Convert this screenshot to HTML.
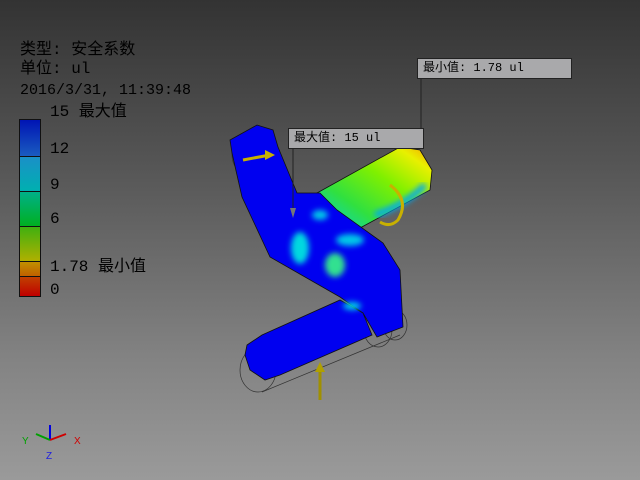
<!DOCTYPE html>
<html><head><style>
html,body{margin:0;padding:0}
body{width:640px;height:480px;overflow:hidden;background:linear-gradient(#333 0%,#565656 35%,#838383 75%,#9a9a9a 100%);position:relative;font-family:"Liberation Mono","Noto Sans CJK SC",monospace;color:#000}
.t{position:absolute;white-space:nowrap;font-size:16px;line-height:16px}
.lab{position:absolute;background:#a9a9ab;border:1px solid #222;font-size:12px;line-height:18px;padding-left:5px;box-sizing:border-box;height:21px}
</style></head><body>
<div class="t" style="left:20px;top:42px">类型: 安全系数</div>
<div class="t" style="left:20px;top:61px">单位: ul</div>
<div class="t" style="left:20px;top:83px;font-size:15px">2016/3/31, 11:39:48</div>
<div class="t" style="left:50px;top:104px">15 最大值</div>
<div class="t" style="left:50px;top:141px">12</div>
<div class="t" style="left:50px;top:177px">9</div>
<div class="t" style="left:50px;top:211px">6</div>
<div class="t" style="left:50px;top:259px">1.78 最小值</div>
<div class="t" style="left:50px;top:282px">0</div>
<div style="position:absolute;left:19px;top:119px;width:20px;height:176px;border:1px solid #111">
<div style="height:36px;background:linear-gradient(#0014b4,#1a5cc0);border-bottom:1px solid #111"></div>
<div style="height:34px;background:linear-gradient(#1a90c8,#00b0b0);border-bottom:1px solid #111"></div>
<div style="height:34px;background:linear-gradient(#00b088,#00b020);border-bottom:1px solid #111"></div>
<div style="height:34px;background:linear-gradient(#40b010,#b0b000);border-bottom:1px solid #111"></div>
<div style="height:14px;background:linear-gradient(#c09000,#c06000);border-bottom:1px solid #111"></div>
<div style="height:19px;background:linear-gradient(#c04000,#c00000)"></div>
</div>
<svg width="640" height="480" style="position:absolute;left:0;top:0">
<defs>
<linearGradient id="g" x1="0" y1="1" x2="1" y2="0">
<stop offset="0" stop-color="#00d0e0"/><stop offset="0.3" stop-color="#30e040"/><stop offset="0.6" stop-color="#80f000"/><stop offset="0.85" stop-color="#e8f000"/><stop offset="1" stop-color="#f8a000"/>
</linearGradient>
<filter id="b"><feGaussianBlur stdDeviation="3"/></filter>
</defs>
<g fill="none" stroke="#333" stroke-width="0.7">
<ellipse cx="258" cy="370" rx="18" ry="22"/>
<path d="M258 348 L390 295 M262 392 L400 335"/>
<ellipse cx="378" cy="330" rx="14" ry="17"/><ellipse cx="395" cy="325" rx="12" ry="15"/>
<ellipse cx="246" cy="155" rx="14" ry="18"/>
</g>
<polygon points="317,193 400,147 420,150 432,170 430,190 360,228 335,210" fill="url(#g)" stroke="#111" stroke-width="0.8"/>
<path d="M425 185 Q405 205 375 215" stroke="#00a8f0" stroke-width="6" fill="none" filter="url(#b)"/>
<path d="M390 185 Q410 200 398 220 Q390 228 380 222" fill="none" stroke="#c8b000" stroke-width="3"/>
<polygon points="230,140 257,125 273,130 278,147 297,193 320,193 337,210 383,243 400,270 403,327 377,337 363,313 340,297 270,257 242,197 232,153" fill="#0000f0" stroke="#111" stroke-width="0.8"/>
<polygon points="247,345 262,335 340,300 363,313 372,335 280,375 265,380 250,370 245,355" fill="#0000f0" stroke="#111" stroke-width="0.8"/>
<g filter="url(#b)">
<ellipse cx="300" cy="248" rx="9" ry="16" fill="#00d8e0"/>
<ellipse cx="335" cy="265" rx="10" ry="12" fill="#30e090"/>
<ellipse cx="350" cy="240" rx="14" ry="6" fill="#00c8e8"/>
<ellipse cx="320" cy="215" rx="8" ry="5" fill="#00c8e8"/>
<ellipse cx="352" cy="306" rx="9" ry="4" fill="#00d0e8"/>
</g>
<path d="M243 160 L270 155" stroke="#c8b000" stroke-width="3"/><polygon points="265,150 275,155 265,160" fill="#c8b000"/>
<path d="M320 400 L320 370" stroke="#a09000" stroke-width="3"/><polygon points="315,372 320,362 325,372" fill="#b0a000"/>
<path d="M293 148 L293 210" stroke="#222"/><polygon points="290,208 296,208 293,218" fill="#777"/>
<path d="M421 78 L421 147" stroke="#222"/>
<g stroke-width="2">
<path d="M50 440 L50 425" stroke="#0000e0"/><path d="M50 440 L36 434" stroke="#00a000"/><path d="M50 440 L66 434" stroke="#d00000"/>
</g>
<text x="46" y="459" font-size="10" fill="#2020e0" font-family="Liberation Sans">Z</text>
<text x="22" y="444" font-size="10" fill="#00a000" font-family="Liberation Sans">Y</text>
<text x="74" y="444" font-size="10" fill="#d00000" font-family="Liberation Sans">X</text>
</svg>
<div class="lab" style="left:417px;top:58px;width:155px">最小值: 1.78 ul</div>
<div class="lab" style="left:288px;top:128px;width:136px">最大值: 15 ul</div>
</body></html>
